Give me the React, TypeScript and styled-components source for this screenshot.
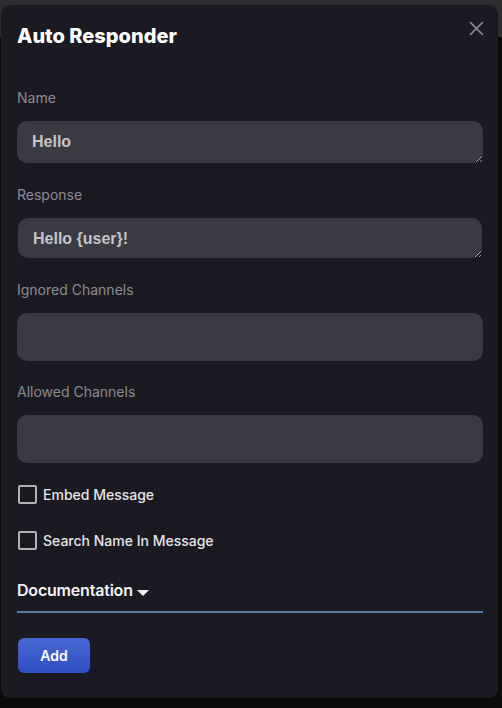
import React, { useEffect, useRef } from 'react';
import styled, { createGlobalStyle } from 'styled-components';

const GlobalStyle = createGlobalStyle`
  html, body {
    margin: 0;
    padding: 0;
    background: #0b0b0c;
  }
  * {
    box-sizing: border-box;
  }
`;

// backdrop: dimmed page header behind the modal
const Page = styled.div`
  width: 502px;
  height: 708px;
  overflow: hidden;
  padding: 5px 4px 0 1px;
  background: linear-gradient(#2d2d2f 0 37px, #0b0b0c 37px);
`;

const Modal = styled.div`
  height: 693px;
  background: #1b1a22;
  border-radius: 9px;
  padding: 17px 15px 0 16px;
  display: flex;
  flex-direction: column;
`;

const Header = styled.div`
  display: flex;
  align-items: flex-start;
  justify-content: space-between;
  height: 28px;
  margin-bottom: 38px;
`;

const Title = styled.h1`
  margin: 0;
  font-family: Inter, 'Noto Sans', sans-serif;
  font-size: 20px;
  line-height: 28px;
  font-weight: 800;
  letter-spacing: 0;
  color: #ffffff;
`;

const CloseButton = styled.button`
  border: none;
  background: none;
  padding: 0;
  margin: -1px -1px 0 0;
  width: 15px;
  height: 15px;
  cursor: pointer;
  display: flex;
`;

const Field = styled.div`
  display: flex;
  flex-direction: column;
  margin-bottom: ${(p: { gap?: number }) => p.gap ?? 21}px;
`;

const Label = styled.label`
  font-family: Inter, 'Noto Sans', sans-serif;
  font-size: 14px;
  line-height: 20px;
  color: #8b8a92;
  margin-bottom: 13px;
`;

const TextBox = styled.textarea<{ h: number; inset?: number }>`
  display: block;
  width: calc(100% - ${(p) => (p.inset ?? 0) * 2}px);
  margin: 0 ${(p) => p.inset ?? 0}px;
  height: ${(p) => p.h}px;
  border: none;
  outline: none;
  border-radius: 10px;
  background: #3a3a43;
  color: #c4c4c8;
  font-family: 'Liberation Sans', Arial, sans-serif;
  font-weight: 700;
  font-size: 16px;
  line-height: 20px;
  padding: 11px 15px;
  resize: vertical;
  caret-color: #e6e6e6;
`;

const Channels = styled.div`
  height: 48px;
  border-radius: 10px;
  background: #3a3a43;
`;

const CheckRow = styled.label<{ gap: number }>`
  display: flex;
  align-items: center;
  gap: 6px;
  margin-bottom: ${(p) => p.gap}px;
  font-family: Inter, 'Noto Sans', sans-serif;
  font-size: 14px;
  font-weight: 500;
  color: #e4e4e8;
  cursor: pointer;
`;

const Check = styled.input`
  appearance: none;
  margin: 0 0 0 1px;
  width: 19px;
  height: 19px;
  border: 2px solid #b3b3b6;
  border-radius: 2px;
  background: transparent;
`;

const DocToggle = styled.div`
  display: flex;
  align-items: center;
  gap: 4px;
  height: 34px;
  padding-bottom: 10px;
  border-bottom: 2px solid #5579a4;
  font-family: Inter, 'Noto Sans', sans-serif;
  font-size: 16px;
  font-weight: 600;
  letter-spacing: -0.2px;
  color: #f2f2f4;
  margin: 1px 0 25px;
`;

const Caret = styled.span`
  width: 0;
  height: 0;
  margin-top: 5px;
  border-left: 6px solid transparent;
  border-right: 6px solid transparent;
  border-top: 6px solid #f2f2f4;
`;

const AddButton = styled.button`
  align-self: flex-start;
  margin-left: 1px;
  width: 72px;
  height: 35px;
  border: none;
  border-radius: 6px;
  background: linear-gradient(#4767d2, #2f4fc2);
  color: #ffffff;
  font-family: Inter, 'Noto Sans', sans-serif;
  font-size: 14px;
  font-weight: 600;
  cursor: pointer;
`;

export default function App() {
  const responseRef = useRef<HTMLTextAreaElement>(null);

  useEffect(() => {
    const el = responseRef.current;
    if (el) {
      el.focus();
      el.setSelectionRange(el.value.length, el.value.length);
    }
  }, []);

  return (
    <>
      <GlobalStyle />
      <Page>
        <Modal>
          <Header>
            <Title>Auto Responder</Title>
            <CloseButton aria-label="Close">
              <svg width="15" height="15" viewBox="0 0 15 15">
                <path d="M1.5 1.5 L13.5 13.5 M13.5 1.5 L1.5 13.5" stroke="#8f8f97" strokeWidth="1.6" strokeLinecap="round" />
              </svg>
            </CloseButton>
          </Header>

          <Field gap={22}>
            <Label>Name</Label>
            <TextBox h={42} defaultValue="Hello" />
          </Field>

          <Field gap={22}>
            <Label>Response</Label>
            <TextBox h={40} inset={1} ref={responseRef} defaultValue="Hello {user}!" />
          </Field>

          <Field gap={21}>
            <Label>Ignored Channels</Label>
            <Channels />
          </Field>

          <Field gap={22}>
            <Label>Allowed Channels</Label>
            <Channels />
          </Field>

          <CheckRow gap={27}>
            <Check type="checkbox" />
            Embed Message
          </CheckRow>

          <CheckRow gap={28}>
            <Check type="checkbox" />
            Search Name In Message
          </CheckRow>

          <DocToggle>
            Documentation
            <Caret />
          </DocToggle>

          <AddButton>Add</AddButton>
        </Modal>
      </Page>
    </>
  );
}
